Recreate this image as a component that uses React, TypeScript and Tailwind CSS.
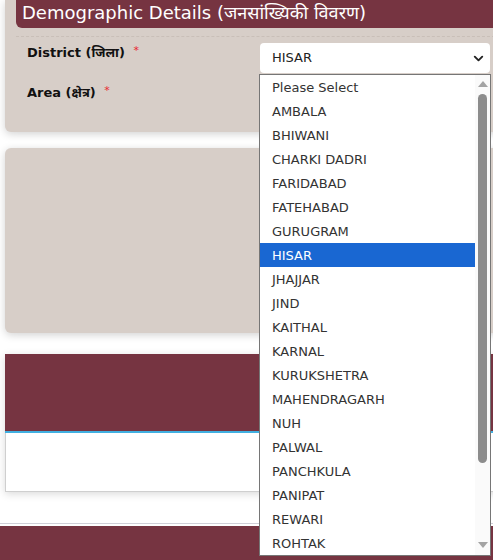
import { ChevronDown } from "lucide-react";

const DISTRICTS = [
  "Please Select",
  "AMBALA",
  "BHIWANI",
  "CHARKI DADRI",
  "FARIDABAD",
  "FATEHABAD",
  "GURUGRAM",
  "HISAR",
  "JHAJJAR",
  "JIND",
  "KAITHAL",
  "KARNAL",
  "KURUKSHETRA",
  "MAHENDRAGARH",
  "NUH",
  "PALWAL",
  "PANCHKULA",
  "PANIPAT",
  "REWARI",
  "ROHTAK",
];

const font = { fontFamily: '"DejaVu Sans", Verdana, "Noto Sans", sans-serif' };

function DistrictList({ selected }: { selected: string }) {
  return (
    <div className="absolute left-[259px] top-[74px] flex h-[482px] w-[232px] border border-[#767676] bg-white">
      <ul className="flex-1 overflow-hidden">
        {DISTRICTS.map((d) => (
          <li
            key={d}
            className={`h-6 pl-3 pt-px text-[13px] leading-6 ${d === selected ? "bg-[#1967d2] text-white" : "text-[#333]"}`}
          >
            {d}
          </li>
        ))}
      </ul>
      {/* scrollbar */}
      <div className="flex w-[15px] flex-col items-center bg-[#fafafa]">
        <div className="mt-[6px] h-0 w-0 border-x-[5px] border-b-[6px] border-x-transparent border-b-[#a3a3a3]" />
        <div className="mt-[7px] h-[369px] w-[9px] rounded-full bg-[#8c8c8c]" />
        <div className="flex-1" />
        <div className="mb-[7px] h-0 w-0 border-x-[5px] border-t-[6px] border-x-transparent border-t-[#a3a3a3]" />
      </div>
    </div>
  );
}

export default function App() {
  return (
    <div className="relative h-[560px] w-[493px] overflow-hidden bg-white" style={font}>
      {/* Demographic card */}
      <div className="ml-[5px] h-[132px] w-[500px] rounded-b-md bg-[#d7cec8] shadow-[0_2px_8px_rgba(0,0,0,0.18)]">
        <div className="ml-[11px] h-[28px] rounded-bl-md bg-[#763441] pl-[6px] text-[18px] leading-[26px] text-white">
          Demographic Details (जनसांख्यिकी विवरण)
        </div>
        <div className="ml-[11px] mt-[8px] border-t border-dashed border-[#c9bfb8]" />
        <div className="flex flex-col">
          <div className="flex items-start">
            <div className="w-[255px] pl-[22px] pt-[6px] text-[13px] font-bold text-[#111]">
              District (जिला) <span className="ml-1 text-[11px] font-normal text-[#e8262f] align-top">*</span>
            </div>
            <div className="mt-[6px] flex h-[30px] w-[230px] items-center justify-between rounded bg-white pl-3 pr-[4px] text-[13px] text-[#222]">
              <span>HISAR</span>
              <ChevronDown className="h-[15px] w-[15px] text-[#222]" strokeWidth={3} />
            </div>
          </div>
          <div className="pl-[22px] pt-[10px] text-[13px] font-bold text-[#111]">
            Area (क्षेत्र) <span className="ml-1 text-[11px] font-normal text-[#e8262f] align-top">*</span>
          </div>
        </div>
      </div>

      {/* Second card */}
      <div className="ml-[5px] mt-[16px] h-[185px] w-[500px] rounded-md bg-[#d7cec8] shadow-[0_2px_8px_rgba(0,0,0,0.18)]">
        <div className="flex h-full justify-end pt-[16px]">
          <div className="flex flex-col gap-[28px]">
            <div className="h-[6px] w-[10px] bg-[#222]" />
            <div className="h-[44px] w-[10px] bg-[#1d1d1d]" />
          </div>
        </div>
      </div>

      {/* Third section */}
      <div className="ml-[5px] mt-[21px] w-[500px] shadow-[0_2px_8px_rgba(0,0,0,0.15)]">
        <div className="h-[77px] bg-[#763441]" />
        <div className="h-[2px] bg-[#41afe0]" />
        <div className="h-[59px] border border-t-0 border-[#cfcfcf] bg-white" />
      </div>

      {/* Footer */}
      <div className="mt-[31px] border-t border-[#d0d0d8]" />
      <div className="mt-[2px] h-[40px] bg-[#763441]" />

      <DistrictList selected="HISAR" />
    </div>
  );
}
